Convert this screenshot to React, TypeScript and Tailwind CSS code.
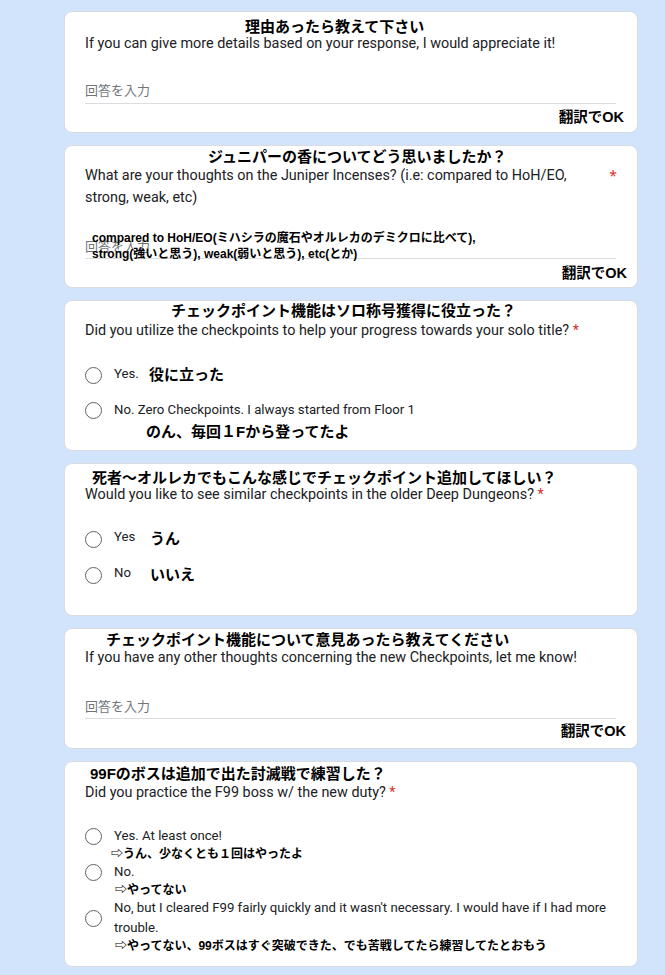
const jp = "font-['Liberation_Sans','Noto_Sans_CJK_JP',sans-serif]";
const en = "font-['Roboto','Noto_Sans_CJK_JP',sans-serif]";
const card = "bg-white rounded-lg border border-[#dadce0] pl-[20px] pr-[13px]";

function Radio() {
  return <span className="block w-[17px] h-[17px] shrink-0 rounded-full border-[1.5px] border-[#5f6368]" />;
}

function Title({ text, indent }: { text: string; indent: string }) {
  return <div className={`${jp} ${indent} text-[15px] leading-[16px] font-bold text-black whitespace-nowrap`}>{text}</div>;
}

function Star() {
  return <span className="text-[#d93025]"> *</span>;
}

function TranslateOk() {
  return <div className={`${jp} text-right text-[14.5px] leading-[18px] font-bold text-black`}>翻訳でOK</div>;
}

export default function App() {
  return (
    <div className="min-h-[975px] bg-[#d2e3fc] pt-[11px] pb-[10px]">
      <div className="ml-[64px] w-[574px] flex flex-col gap-[12px]">
        {/* 1 */}
        <div className={`${card} pt-[7px] pb-[6px]`}>
          <Title text="理由あったら教えて下さい" indent="pl-[160px]" />
          <div className={`${en} text-[14.4px] leading-[18px] text-[#202124]`}>
            If you can give more details based on your response, I would appreciate it!
          </div>
          <div className={`${en} mt-[30px] mr-[8px] border-b border-[#dadce0] pb-[4px] text-[13px] leading-[16px] text-[#70757a]`}>回答を入力</div>
          <div className="mt-[4px]"><TranslateOk /></div>
        </div>

        {/* 2 */}
        <div className={`${card} pt-[3px] pb-[5px]`}>
          <Title text="ジュニパーの香についてどう思いましたか？" indent="pl-[123px]" />
          <div className="flex justify-between">
            <div className={`${en} text-[14.4px] leading-[22px] text-[#202124]`}>
              What are your thoughts on the Juniper Incenses? (i.e: compared to HoH/EO,
              <br />
              strong, weak, etc)
            </div>
            <span className="mr-[7px] text-[14px] leading-[22px] text-[#d93025]">*</span>
          </div>
          <div className="relative mt-[30px] mr-[8px] border-b border-[#dadce0] pb-[3px]">
            <div className={`${en} text-[13px] leading-[16px] text-[#70757a]`}>回答を入力</div>
            <div className={`${jp} absolute left-[7px] top-[-9px] text-[12px] leading-[16px] font-bold text-black whitespace-nowrap`}>
              compared to HoH/EO(ミハシラの魔石やオルレカのデミクロに比べて),
              <br />
              strong(強いと思う), weak(弱いと思う), etc(とか)
            </div>
          </div>
          <div className="mt-[5px] mr-[-3px]"><TranslateOk /></div>
        </div>

        {/* 3 */}
        <div className={`${card} pt-[2px] pb-[8px]`}>
          <Title text="チェックポイント機能はソロ称号獲得に役立った？" indent="pl-[86px]" />
          <div className={`${en} mt-[1px] text-[14.4px] leading-[22px] text-[#202124]`}>
            Did you utilize the checkpoints to help your progress towards your solo title?<Star />
          </div>
          <div className="mt-[21px] flex items-center h-[24px]">
            <Radio />
            <span className={`${en} ml-[12px] w-[35px] text-[13.2px] text-[#202124] -translate-y-[1px]`}>Yes.</span>
            <span className={`${jp} text-[15px] font-bold text-black`}>役に立った</span>
          </div>
          <div className="mt-[11px] flex items-center h-[24px]">
            <Radio />
            <span className={`${en} ml-[12px] text-[13.2px] text-[#202124]`}>No. Zero Checkpoints. I always started from Floor 1</span>
          </div>
          <div className={`${jp} pl-[61px] text-[15px] leading-[20px] font-bold text-black`}>のん、毎回１Fから登ってたよ</div>
        </div>

        {/* 4 */}
        <div className={`${card} pt-[6px] pb-[28px]`}>
          <Title text="死者〜オルレカでもこんな感じでチェックポイント追加してほしい？" indent="pl-[7px]" />
          <div className={`${en} text-[14.4px] leading-[18px] text-[#202124]`}>
            Would you like to see similar checkpoints in the older Deep Dungeons?<Star />
          </div>
          <div className="mt-[23px] flex items-center h-[24px]">
            <Radio />
            <span className={`${en} ml-[12px] w-[36px] text-[13.2px] text-[#202124] -translate-y-[2px]`}>Yes</span>
            <span className={`${jp} text-[15px] font-bold text-black`}>うん</span>
          </div>
          <div className="mt-[12px] flex items-center h-[24px]">
            <Radio />
            <span className={`${en} ml-[12px] w-[36px] text-[13.2px] text-[#202124] -translate-y-[2px]`}>No</span>
            <span className={`${jp} text-[15px] font-bold text-black`}>いいえ</span>
          </div>
        </div>

        {/* 5 */}
        <div className={`${card} pt-[3px] pb-[8px]`}>
          <Title text="チェックポイント機能について意見あったら教えてください" indent="pl-[21px]" />
          <div className={`${en} text-[14.4px] leading-[20px] text-[#202124]`}>
            If you have any other thoughts concerning the new Checkpoints, let me know!
          </div>
          <div className={`${en} mt-[31px] mr-[8px] border-b border-[#dadce0] pb-[3px] text-[13px] leading-[16px] text-[#70757a]`}>回答を入力</div>
          <div className="mt-[3px] mr-[-2px]"><TranslateOk /></div>
        </div>

        {/* 6 */}
        <div className={`${card} pt-[4px] pb-[12px]`}>
          <Title text="99Fのボスは追加で出た討滅戦で練習した？" indent="pl-[5px]" />
          <div className={`${en} mt-[1px] text-[14.4px] leading-[20px] text-[#202124]`}>
            Did you practice the F99 boss w/ the new duty?<Star />
          </div>
          <div className="mt-[23px] flex items-center">
            <Radio />
            <span className={`${en} ml-[12px] text-[13.2px] leading-[20px] text-[#202124]`}>Yes. At least once!</span>
          </div>
          <div className={`${jp} pl-[26px] text-[12px] leading-[16px] font-bold text-black`}>⇨うん、少なくとも１回はやったよ</div>
          <div className="flex items-center">
            <Radio />
            <span className={`${en} ml-[12px] text-[13.2px] leading-[20px] text-[#202124]`}>No.</span>
          </div>
          <div className={`${jp} pl-[30px] text-[12px] leading-[16px] font-bold text-black`}>⇨やってない</div>
          <div className="flex items-center">
            <Radio />
            <span className={`${en} ml-[12px] text-[13.2px] leading-[20px] text-[#202124]`}>
              No, but I cleared F99 fairly quickly and it wasn't necessary. I would have if I had more
              <br />
              trouble.
            </span>
          </div>
          <div className={`${jp} pl-[30px] text-[12px] leading-[16px] font-bold text-black whitespace-nowrap`}>
            ⇨やってない、99ボスはすぐ突破できた、でも苦戦してたら練習してたとおもう
          </div>
        </div>
      </div>
    </div>
  );
}
